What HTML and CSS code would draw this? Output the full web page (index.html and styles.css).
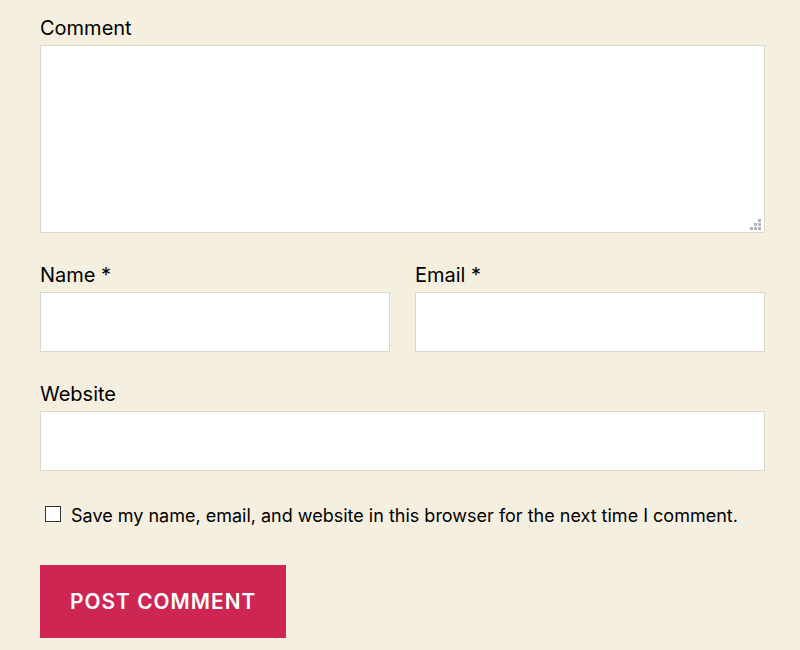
FILE: index.html
```html
<!DOCTYPE html>
<html lang="en">
<head>
<meta charset="utf-8">
<title>Comment form</title>
<link rel="stylesheet" href="styles.css">
</head>
<body>
<form class="comment-form">
  <div class="field">
    <label class="label" for="comment">Comment</label>
    <div class="textarea-wrap">
      <textarea id="comment" class="textarea"></textarea>
      <svg class="grip" width="11" height="11" viewBox="0 0 11 11" aria-hidden="true">
        <rect x="8" y="0" width="3" height="3"/>
        <rect x="4" y="4" width="3" height="3"/>
        <rect x="8" y="4" width="3" height="3"/>
        <rect x="0" y="8" width="3" height="3"/>
        <rect x="4" y="8" width="3" height="3"/>
        <rect x="8" y="8" width="3" height="3"/>
      </svg>
    </div>
  </div>
  <div class="row">
    <div class="field">
      <label class="label" for="author">Name *</label>
      <input id="author" class="input" type="text">
    </div>
    <div class="field">
      <label class="label" for="email">Email *</label>
      <input id="email" class="input" type="email">
    </div>
  </div>
  <div class="field">
    <label class="label" for="url">Website</label>
    <input id="url" class="input" type="url">
  </div>
  <div class="consent">
    <input id="consent" class="checkbox" type="checkbox">
    <label class="consent-label" for="consent">Save my name, email, and website in this browser for the next time I comment.</label>
  </div>
  <div class="submit-row">
    <button class="submit" type="button">Post Comment</button>
  </div>
</form>
</body>
</html>
```

FILE: styles.css
```css
html, body {
  margin: 0;
  padding: 0;
  background: #f5efe0;
}

body {
  font-family: Inter, "Liberation Sans", sans-serif;
  color: #000;
}

.comment-form {
  width: 725px;
  margin-left: 40px;
  padding-top: 13px;
  display: flex;
  flex-direction: column;
  gap: 27px;
}

.field {
  display: flex;
  flex-direction: column;
}

.label {
  font-size: 20px;
  line-height: 30px;
  margin-bottom: 2px;
}

.textarea-wrap {
  position: relative;
}

.textarea,
.input {
  box-sizing: border-box;
  width: 100%;
  border: 1px solid #dcd7ca;
  background: #fff;
  margin: 0;
  font: inherit;
  display: block;
  outline: none;
}

.textarea {
  height: 188px;
  resize: none;
}

.grip {
  position: absolute;
  right: 4px;
  bottom: 3px;
  fill: #b4b4b4;
}

.input {
  height: 60px;
}

.row {
  display: grid;
  grid-template-columns: 350px 350px;
  column-gap: 25px;
}

.consent {
  display: flex;
  align-items: flex-start;
  gap: 10px;
  margin-top: 4px;
  padding-left: 5px;
}

.checkbox {
  appearance: none;
  -webkit-appearance: none;
  box-sizing: border-box;
  width: 16px;
  height: 16px;
  margin: 4px 0 0 0;
  border: 1px solid #333;
  background: #fff;
  flex: none;
}

.consent-label {
  font-size: 18px;
  line-height: 27px;
  white-space: nowrap;
}

.submit-row {
  margin-top: 9px;
}

.submit {
  background: #cd2653;
  color: #fff;
  border: none;
  font-family: Inter, "Liberation Sans", sans-serif;
  font-size: 20.8px;
  font-weight: 600;
  letter-spacing: 1.05px;
  text-transform: uppercase;
  line-height: 1.25;
  padding: 0 30px;
  height: 73px;
  cursor: pointer;
}
```
